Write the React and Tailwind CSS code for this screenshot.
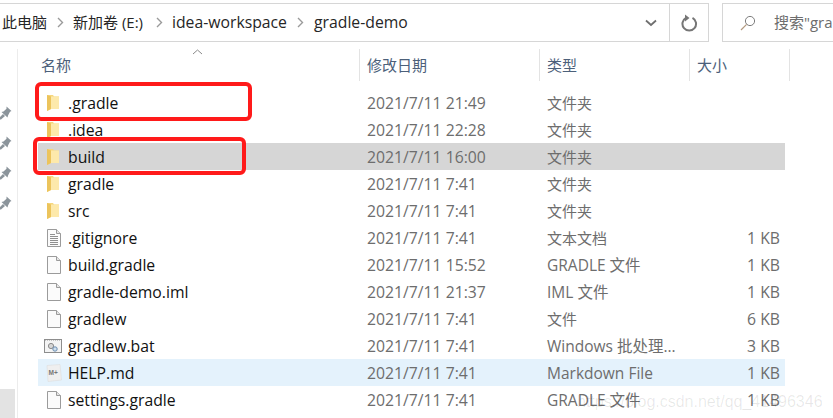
import React from "react";

const rows = [
  { name: ".gradle", date: "2021/7/11 21:49", type: "文件夹", size: "", icon: "folder" },
  { name: ".idea", date: "2021/7/11 22:28", type: "文件夹", size: "", icon: "folder" },
  { name: "build", date: "2021/7/11 16:00", type: "文件夹", size: "", icon: "folder", bg: "bg-[#d6d6d6]" },
  { name: "gradle", date: "2021/7/11 7:41", type: "文件夹", size: "", icon: "folder" },
  { name: "src", date: "2021/7/11 7:41", type: "文件夹", size: "", icon: "folder" },
  { name: ".gitignore", date: "2021/7/11 7:41", type: "文本文档", size: "1 KB", icon: "text" },
  { name: "build.gradle", date: "2021/7/11 15:52", type: "GRADLE 文件", size: "1 KB", icon: "file" },
  { name: "gradle-demo.iml", date: "2021/7/11 21:37", type: "IML 文件", size: "1 KB", icon: "file" },
  { name: "gradlew", date: "2021/7/11 7:41", type: "文件", size: "6 KB", icon: "file" },
  { name: "gradlew.bat", date: "2021/7/11 7:41", type: "Windows 批处理...", size: "3 KB", icon: "bat" },
  { name: "HELP.md", date: "2021/7/11 7:41", type: "Markdown File", size: "1 KB", icon: "md", bg: "bg-[#e4f2fc]" },
  { name: "settings.gradle", date: "2021/7/11 7:41", type: "GRADLE 文件", size: "1 KB", icon: "file" },
];

const crumbs = [
  { label: "此电脑", w: "w-[71px] text-[15px]", mr: "mr-[9px]" },
  { label: "新加卷 (E:)", w: "w-[99px] text-[15px]", mr: "mr-[9px]" },
  { label: "idea-workspace", w: "w-[142px]", mr: "mr-[10px]" },
  { label: "gradle-demo", w: "w-[100px]" },
];

const headers = [
  { label: "修改日期", w: "w-[180px]" },
  { label: "类型", w: "w-[150px]" },
  { label: "大小", w: "w-[100px]" },
];

function FolderIcon() {
  return (
    <svg width="15" height="18" viewBox="0 0 15 18">
      <path d="M1 1 L7 1 L8 2.5 L13 2.5 L13 15 L5 15 L1 17 Z" fill="#f6d77f" />
      <path d="M5 2.5 H13 V15 H5 Z" fill="#fde9ab" />
      <path d="M1 1 L5 2.5 V15 L1 17 Z" fill="#ecc45c" />
    </svg>
  );
}

function FileIcon({ lines }) {
  return (
    <svg width="16" height="18" viewBox="0 0 16 18">
      <path d="M1.5 0.5 H10.5 L14.5 4.5 V17.5 H1.5 Z" fill="#fbfbfb" stroke="#9b9b9b" />
      <path d="M10.5 0.5 V4.5 H14.5" fill="#e6e6e6" stroke="#9b9b9b" />
      {lines && (
        <path d="M4 5.5 H9 M4 7.5 H12 M4 9.5 H12 M4 11.5 H12 M4 13.5 H12 M4 15.5 H12" stroke="#8f8f8f" />
      )}
    </svg>
  );
}

function BatIcon() {
  return (
    <svg width="18" height="14" viewBox="0 0 18 14" className="ml-[-2px]">
      <rect x="0.5" y="0.5" width="17" height="13" fill="#f4f4f4" stroke="#8d8d8d" />
      <path d="M1 1.5 H17" stroke="#c4c4c4" strokeDasharray="1 1" />
      <circle cx="7" cy="7" r="2.6" fill="#d7d7d7" stroke="#8a8a8a" />
      <circle cx="11" cy="10" r="2.2" fill="#cfe0ee" stroke="#6c8db0" />
    </svg>
  );
}

function MdIcon() {
  return (
    <svg width="16" height="18" viewBox="0 0 16 18">
      <path d="M1 1.5 L14 0.5 L15.5 16 L2 17.5 Z" fill="#efefef" stroke="#dedede" strokeWidth="0.6" />
      <text x="2.6" y="11" fontSize="6.5" fontWeight="700" fill="#777" fontFamily="Liberation Sans, sans-serif">M+</text>
    </svg>
  );
}

function RowIcon({ kind }) {
  if (kind === "folder") return <FolderIcon />;
  if (kind === "text") return <FileIcon lines />;
  if (kind === "bat") return <BatIcon />;
  if (kind === "md") return <MdIcon />;
  return <FileIcon />;
}

function Pin() {
  return (
    <svg width="12" height="14" viewBox="0 0 12 14">
      <path d="M6.5 0.5 L11.5 5 L10 5.7 L8 9.5 L7.5 11.5 L1.5 6 L3.5 5.4 L6.5 2.8 Z M3 8 L0 11 V13.5 H1 L5 10 Z" fill="#8b949b" />
    </svg>
  );
}

function Chevron() {
  return (
    <svg width="7" height="11" viewBox="0 0 7 11" className="shrink-0">
      <path d="M1 1 L5.5 5.5 L1 10" fill="none" stroke="#9a9a9a" strokeWidth="1.4" />
    </svg>
  );
}

const isCjk = (s) => /^[\u4e00-\u9fff]+$/.test(s);

export default function App() {
  return (
    <div className="relative flex h-[418px] w-[833px] flex-col overflow-hidden bg-white font-['Open_Sans','Noto_Sans_CJK_SC',sans-serif] text-[15.75px]">
      {/* address bar */}
      <div className="mt-[3px] flex h-[39px] shrink-0">
        <div className="flex w-[669px] items-center border-y border-[#d6d6d6] pl-[2px] text-[#262626]">
          {crumbs.map((c) => (
            <div key={c.label} className={`flex items-center ${c.w}`}>
              <span className="whitespace-nowrap">{c.label}</span>
              {c.mr && (
                <span className={`ml-auto flex ${c.mr}`}>
                  <Chevron />
                </span>
              )}
            </div>
          ))}
          <div className="ml-auto mr-[12px]">
            <svg width="12" height="8" viewBox="0 0 12 8">
              <path d="M1 1.5 L6 6 L11 1.5" fill="none" stroke="#6f6f6f" strokeWidth="1.8" />
            </svg>
          </div>
        </div>
        <div className="flex w-[40px] items-center justify-center border border-[#d6d6d6]">
          <svg width="17" height="18" viewBox="0 0 17 18">
            <path d="M11.5 3.8 A6.8 6.8 0 1 1 5 3.8" fill="none" stroke="#767676" strokeWidth="2" />
            <path d="M4 0.5 L8.5 4 L4 7.5 Z" fill="#767676" />
          </svg>
        </div>
        <div className="ml-[13px] flex flex-1 items-center border-y border-l border-[#d6d6d6] pl-[17px] text-[#6d6d6d]">
          <svg width="16" height="16" viewBox="0 0 16 16">
            <circle cx="10" cy="6" r="4.6" fill="none" stroke="#7d7d7d" />
            <path d="M6.6 9.4 L1 15" stroke="#b39a80" strokeWidth="1.2" />
          </svg>
          <span className="ml-[18px] whitespace-nowrap text-[15px]">搜索"gra</span>
        </div>
      </div>

      <div className="flex flex-1">
        {/* pinned rail */}
        <div className="flex w-[18px] shrink-0 flex-col">
          <div className="mt-[7px] flex flex-1 flex-col border-r border-[#ececec]">
            <div className="mt-[57px] flex flex-col gap-[16px]">
              <Pin />
              <Pin />
              <Pin />
              <Pin />
            </div>
            <div className="mt-auto mr-[2px] h-[29px] bg-[#e3e3e3]" />
          </div>
        </div>

        {/* file list */}
        <div className="flex flex-1 flex-col pt-[7px]">
          <div className="relative flex h-[32px] items-center text-[15px] text-[#4c607a]">
            <div className="flex h-full w-[341px] items-center pl-[23px]">名称</div>
            <svg width="11" height="6" viewBox="0 0 11 6" className="absolute left-[174px] top-[0px]">
              <path d="M1 5 L5.5 1 L10 5" fill="none" stroke="#8a8a8a" />
            </svg>
            {headers.map((h) => (
              <div key={h.label} className={`flex h-full items-center border-l border-[#e3e3e3] pl-[7px] ${h.w}`}>
                {h.label}
              </div>
            ))}
            <div className="h-full border-l border-[#e3e3e3]" />
          </div>
          <div className="mt-[8px] flex flex-col">
            {rows.map((r) => (
              <div key={r.name} className={`ml-[20px] flex h-[27px] w-[747px] items-center pt-[1px] ${r.bg || ""}`}>
                <div className="flex w-[30px] items-center pl-[8px]">
                  <RowIcon kind={r.icon} />
                </div>
                <div className="w-[299px] pt-[2px] text-[#111111]">{r.name}</div>
                <div className="w-[180px] pt-[2px] text-[#6d6d6d]">{r.date}</div>
                <div className={`w-[150px] whitespace-nowrap text-[#6d6d6d] ${isCjk(r.type) ? "text-[15px]" : "pt-[2px] text-[15.5px]"}`}>
                  {r.type}
                </div>
                <div className="w-[83px] pt-[2px] text-right text-[#6d6d6d]">{r.size}</div>
              </div>
            ))}
          </div>
        </div>
      </div>

      {/* red annotations */}
      <div className="absolute left-[35px] top-[82px] h-[39px] w-[217px] rounded-[6px] border-[4px] border-[#ff1a1a]" />
      <div className="absolute left-[33px] top-[137px] h-[38px] w-[213px] rounded-[6px] border-[4px] border-[#ff1a1a]" />

      {/* watermark */}
      <div className="pointer-events-none absolute left-[577px] top-[390px] whitespace-nowrap font-['Liberation_Sans',sans-serif] text-[16px] text-[#00000018]">
        https://blog.csdn.net/qq_41496346
      </div>
    </div>
  );
}
